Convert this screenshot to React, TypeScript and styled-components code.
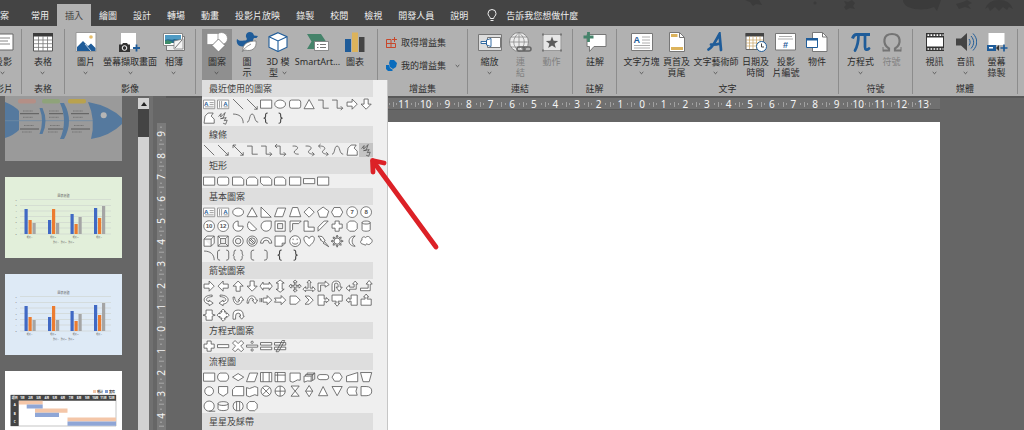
import React from "react";
import styled, { createGlobalStyle, css } from "styled-components";

const GlobalStyle = createGlobalStyle`
  * { box-sizing: border-box; }
  body {
    margin: 0;
    overflow: hidden;
    background: #666;
    font-family: "Noto Sans", "Noto Sans CJK TC", sans-serif;
    font-size: 9px;
    line-height: 11px;
    color: #2b2b2b;
  }
  button, input {
    font: inherit;
    color: inherit;
    border: 0;
    padding: 0;
    margin: 0;
    background: none;
  }
  svg { display: block; }
`;

/* ---------- page frame ---------- */

const Frame = styled.div`
  position: relative;
  display: flex;
  flex-direction: column;
  height: 100vh;
  overflow: hidden;
`;

const TabBar = styled.nav`
  position: relative;
  display: flex;
  align-items: stretch;
  height: 26px;
  padding-top: 4px;
  background: #444;
  color: #f0f0f0;
  flex: none;
`;

const Tab = styled.button<{ $active?: boolean; $first?: boolean }>`
  padding: 0 8px;
  white-space: nowrap;
  flex: none;
  ${(p) => p.$first && css`padding: 0 14px 0 0;`}
  ${(p) =>
    p.$active &&
    css`
      background: #b1b1b1;
      color: #444;
    `}
`;

const Tell = styled.label`
  display: flex;
  align-items: center;
  gap: 9px;
  padding-left: 11px;
  flex: 1;
`;

const TellInput = styled.input`
  width: 120px;
  outline: 0;
  &::placeholder {
    color: #f0f0f0;
    opacity: 1;
  }
`;

const Doodles = styled.svg`
  position: absolute;
  top: 0;
  right: 0;
`;

const Ribbon = styled.div`
  display: flex;
  padding: 3px 0 2px;
  background: #b1b1b1;
  flex: none;
`;

const Group = styled.section<{ $w: number }>`
  display: flex;
  flex-direction: column;
  width: ${(p) => p.$w}px;
  flex: none;
  border-right: 1px solid #8c8c8c;
`;

const Items = styled.div<{ $pad?: number }>`
  display: flex;
  align-items: flex-start;
  height: 54px;
  padding-left: ${(p) => p.$pad ?? 0}px;
`;

const GroupName = styled.div`
  text-align: center;
  white-space: nowrap;
`;

const ClippedGroup = styled(Group)`
  align-items: flex-end;
  overflow: hidden;
  padding-right: 8px;
`;

const ClippedItems = styled.div`
  display: flex;
  flex-direction: column;
  align-items: flex-end;
  height: 54px;
`;

const Tool = styled.button<{ $w: number; $on?: boolean; $off?: boolean }>`
  display: flex;
  flex-direction: column;
  align-items: center;
  gap: 4px;
  width: ${(p) => p.$w}px;
  height: 51px;
  padding-top: 3px;
  flex: none;
  background: ${(p) => (p.$on ? "#8f8f8f" : "none")};
  color: ${(p) => (p.$off ? "#808080" : "inherit")};
`;

const ToolText = styled.span`
  display: flex;
  flex-direction: column;
  align-items: center;
  white-space: nowrap;
`;

const Line = styled.span`
  display: flex;
  align-items: center;
  gap: 4px;
  min-height: 11px;
`;

const Anchor = styled.div`
  position: relative;
`;

const AddIns = styled.div`
  display: flex;
  flex-direction: column;
  gap: 12px;
  height: 54px;
  padding: 8px 0 0 8px;
`;

const AddInButton = styled.button`
  display: flex;
  align-items: center;
  gap: 4px;
  height: 11px;
  white-space: nowrap;
`;

const AddInCaret = styled.span`
  padding-left: 5px;
`;

/* ---------- shape gallery ---------- */

const Gallery = styled.div`
  position: absolute;
  top: 100%;
  left: 0;
  z-index: 2;
  width: 186px;
  height: 420px;
  padding-right: 14px;
  overflow: hidden;
  background: #efefef;
  border-right: 1px solid #c6c6c6;
  color: #444;
`;

const GalleryHead = styled.h3`
  margin: 0;
  padding: 0 7px;
  font-size: 9px;
  font-weight: 400;
  line-height: 17px;
  background: #dedede;
`;

const GalleryGrid = styled.div`
  display: grid;
  grid-template-columns: repeat(12, 1fr);
`;

const ShapeButton = styled.button<{ $on?: boolean }>`
  aspect-ratio: 1;
  background: ${(p) => (p.$on ? "#c4c4c4" : "none")};
`;

/* ---------- workspace ---------- */

const Workspace = styled.main`
  display: flex;
  flex: 1;
  min-height: 0;
  overflow: hidden;
  background: #666;
`;

const SlidePanel = styled.aside`
  display: flex;
  flex-direction: column;
  gap: 16px;
  width: 138px;
  flex: none;
  padding-left: 5px;
`;

const Thumb = styled.svg`
  flex: none;
`;

const ScrollBar = styled.div`
  display: flex;
  flex-direction: column;
  width: 11px;
  margin-top: 2px;
  background: #d2d2d2;
  flex: none;
`;

const ScrollUp = styled.button`
  display: flex;
  align-items: center;
  justify-content: center;
  height: 11px;
`;

const ScrollThumb = styled.div`
  height: 28px;
  background: #444;
`;

const Splitter = styled.div`
  width: 4px;
  margin-right: 4px;
  background: #707070;
  flex: none;
`;

const VRuler = styled.div`
  display: grid;
  grid-template-rows: repeat(19, 1fr);
  width: 9px;
  height: 412px;
  margin-top: 27px;
  background: #7a7a7a;
  color: #f4f4f4;
  font-size: 10px;
  line-height: 9px;
  flex: none;
`;

const VMark = styled.span`
  display: flex;
  align-items: center;
  justify-content: center;
  writing-mode: vertical-rl;
  transform: rotate(180deg);
  background:
    linear-gradient(#a8a8a8, #a8a8a8) 50% 0 / 5px 1px no-repeat,
    linear-gradient(#a8a8a8, #a8a8a8) 50% 20% / 2px 1px no-repeat,
    linear-gradient(#a8a8a8, #a8a8a8) 50% 80% / 2px 1px no-repeat;
`;

const Canvas = styled.div`
  display: flex;
  flex-direction: column;
  flex: 1;
  min-width: 0;
  border-top: 2px solid #585858;
`;

const HRuler = styled.div`
  display: grid;
  grid-template-columns: repeat(27, 1fr);
  height: 12px;
  margin: 0 84px 12px 178px;
  padding: 0 6px;
  background: #707070;
  border-bottom: 1px solid #595959;
  color: #f4f4f4;
  font-size: 10px;
  line-height: 12px;
  flex: none;
`;

const HMark = styled.span`
  text-align: center;
  background:
    linear-gradient(#a0a0a0, #a0a0a0) 0 50% / 1px 5px no-repeat,
    linear-gradient(#a0a0a0, #a0a0a0) 15% 50% / 1px 2px no-repeat,
    linear-gradient(#a0a0a0, #a0a0a0) 85% 50% / 1px 2px no-repeat;
`;

const Page = styled.div`
  flex: 1;
  margin: 0 84px 0 178px;
  background: #fff;
`;

const Annotation = styled.svg`
  position: absolute;
  top: 154px;
  left: 366px;
  z-index: 3;
  pointer-events: none;
`;

/* ---------- ribbon icons ---------- */

const Caret = () => (
  <svg width="5" height="4" viewBox="0 0 5 4" fill="none" stroke="#444" strokeWidth="0.8">
    <path d="M0.7 1 2.5 2.7 4.3 1" />
  </svg>
);

const Icon = ({ w = 22, children }: { w?: number; children: React.ReactNode }) => (
  <svg width={w} height="20" viewBox={`0 0 ${w} 20`} fill="none">
    {children}
  </svg>
);

const icons: Record<string, React.ReactNode> = {
  slide: (
    <Icon>
      <path d="M1 2h20v16H1z" fill="#fff" stroke="#666" />
      <path d="M4 6h14M4 9h12M4 12h14" stroke="#888" />
    </Icon>
  ),
  table: (
    <Icon>
      <path d="M1.5 1.5h19v17.5h-19z" fill="#fff" stroke="#555" />
      <path d="M1 1h20v3.5H1z" fill="#3b3b3b" />
      <path d="M6.5 4v15M11 4v15M15.5 4v15M1.5 8h19M1.5 11.7h19M1.5 15.4h19" stroke="#777" strokeWidth="0.8" />
    </Icon>
  ),
  picture: (
    <Icon>
      <path d="M1 0.5h20v19H1z" fill="#fff" stroke="#999" />
      <path d="M2 19v-4l6-6 5 5 3-2.5 4.5 4.5v3z" fill="#1f5c99" />
      <circle cx="16" cy="5" r="1.8" fill="#e6bd6a" />
      <path d="m10 12 6 7" stroke="#fff" strokeWidth="0.7" />
    </Icon>
  ),
  screenshot: (
    <Icon>
      <path d="M2 1h15v16H2z" fill="#fff" />
      <path d="M0 12.5h3l1-1.5h4l1 1.5h2V20H0z" fill="#333" />
      <circle cx="5.5" cy="16" r="2.3" stroke="#fff" />
      <path d="M17.5 12.5v7M14 16h7" stroke="#1f5c99" strokeWidth="1.8" />
    </Icon>
  ),
  album: (
    <Icon>
      <path d="M3.5 4.5h18v14h-18z" fill="#eee" stroke="#777" />
      <path d="M0.5 1.5h19v12h-19z" fill="#fff" stroke="#888" />
      <path d="M2 3h16v5H2z" fill="#4f9bc4" />
      <path d="M2 8c4-2 7 1 9-1l7 1v3H2z" fill="#23698f" />
      <path d="M2 9c3-2 5 0 8 1l-3 2H2z" fill="#3d8a68" />
      <path d="M11 17V9l9-2v10z" fill="#f5f5f5" stroke="#777" strokeWidth="0.7" />
      <path d="m12 16 7-8" stroke="#777" />
    </Icon>
  ),
  shapes: (
    <Icon>
      <circle cx="15.5" cy="6.5" r="6" fill="#fff" stroke="#888" strokeWidth="0.7" />
      <path d="M1 1.5h11v11H1z" fill="#fff" stroke="#888" strokeWidth="0.7" />
      <path d="m12.5 7 6.500 6.5-6.500 6.5L6 13.5z" fill="#fff" stroke="#777" strokeWidth="0.9" />
    </Icon>
  ),
  duck: (
    <Icon>
      <path d="M10 5c-1-6 7-6.500 8-1.500l4 .500-1.500 2H18c-1 2-1.500 2.500-.500 5l-8 3.500H6.500c-5 0-6.500-4-5.500-7.500 2 2 4 2 7 1.500 3 0 3.500-1.500 2-3.500z" fill="#1f5c99" />
      <path d="M7 19C6 12 12 9 20 9c1 7-4 11-11 9z" fill="#fff" stroke="#777" strokeWidth="0.8" />
      <path d="M6 20c3-5 6-6 9-8" stroke="#777" strokeWidth="0.8" />
    </Icon>
  ),
  cube: (
    <Icon>
      <path d="m11 .7 9 4v10.5l-9 4.3-9-4.3V4.7z" fill="#fff" stroke="#1f5c99" strokeWidth="1.1" />
      <path d="m2 4.7 9 4.3 9-4.3M11 9v10.5" stroke="#1f5c99" strokeWidth="1.1" />
    </Icon>
  ),
  smartart: (
    <Icon w={24}>
      <path d="M1 2h14l5 7.5-4 7.5H1l4.500-7.5z" fill="#45836a" />
      <path d="M8.5 9.5h14v9h-14z" fill="#fff" stroke="#777" strokeWidth="0.8" />
      <path d="M11 12.5h1.5M14 12.5h6M11 15.5h1.5M14 15.5h6" stroke="#777" />
    </Icon>
  ),
  chart: (
    <Icon>
      <path d="M1 7h6v13H1z" fill="#1f5c99" />
      <path d="M8 .5h6V20H8z" fill="#dcb35c" />
      <path d="M15 5h5.5v15H15z" fill="#444" />
    </Icon>
  ),
  zoom: (
    <Icon w={24}>
      <path d="M.5 2.5h23v16H.5z" fill="#ddd" stroke="#777" />
      <path d="M9.500 5.5h13v10h-13z" fill="#fff" stroke="#777" />
      <path d="M8.5 8v5l4.500 1.500v-8zM3 9.5h5.500v2H3z" fill="#fff" stroke="#1f5c99" strokeWidth="0.9" />
    </Icon>
  ),
  link: (
    <Icon w={24}>
      <circle cx="10" cy="10" r="9.5" fill="#ececec" stroke="#8a8a8a" />
      <path d="M.5 10h19M2 5h16M2 15h16M10 .5c-7 6-7 13 0 19 7-6 7-13 0-19zM10 .5v19" stroke="#8a8a8a" strokeWidth="0.8" />
      <rect x="8" y="15" width="8" height="4" rx="2" stroke="#666" strokeWidth="1.5" />
      <rect x="14" y="15" width="8" height="4" rx="2" stroke="#666" strokeWidth="1.5" />
    </Icon>
  ),
  action: (
    <Icon>
      <path d="M2 2.5h18v16H2z" fill="#e6e6e6" stroke="#999" />
      <path d="m11 4.5 1.6 4.2 4.5.2-3.500 2.800 1.200 4.300-3.800-2.400L7.200 16l1.200-4.300-3.500-2.800 4.500-.2z" fill="#5c5c5c" />
      <path d="M1 1.500h2v2H1zM19 1.500h2v2h-2zM1 17.500h2v2H1zM19 17.500h2v2h-2z" fill="#777" />
    </Icon>
  ),
  comment: (
    <Icon w={24}>
      <path d="M4 2.5h19v12H11l-4.500 5v-5H4z" fill="#fff" stroke="#777" />
      <path d="M5.5 0v10M.5 5h10" stroke="#45836a" strokeWidth="2.8" />
    </Icon>
  ),
  textbox: (
    <Icon>
      <path d="M.5 1.5h21v17H.5z" fill="#fff" stroke="#777" />
      <text x="2.5" y="11" fontFamily="Liberation Sans" fontWeight="700" fontSize="9" fill="#1f5c99">A</text>
      <path d="M11 5h8M11 8h8M11 11h8M3 13.5h16M3 16h16" stroke="#999" strokeWidth="0.8" />
    </Icon>
  ),
  header: (
    <Icon w={18}>
      <path d="M1.5.5h10l5 5v14h-15z" fill="#fff" stroke="#777" />
      <path d="M11.5.5v5h5" stroke="#777" />
      <path d="M3 2h6.5v3H3zM3 15h12v3H3z" fill="#dcb35c" />
    </Icon>
  ),
  wordart: (
    <Icon>
      <path d="M3.500 17.500c4-1.500 7-8.500 11-15.500l1.500 16M6 12.500c3 .5 6 0 9-1" stroke="#1f5c99" strokeWidth="2.7" strokeLinecap="round" />
    </Icon>
  ),
  date: (
    <Icon>
      <path d="M1 1.5h17.5v16H1z" fill="#fff" stroke="#666" />
      <path d="M.5 1h18.500v3.500H.5z" fill="#444" />
      <path d="M4.5 4v13M8 4v13M11.5 4v13M15 4v13M1 8h17M1 11h17M1 14h17" stroke="#c9a566" strokeWidth="0.7" />
      <circle cx="16.5" cy="14.5" r="5" fill="#fff" stroke="#1f5c99" />
      <path d="M16.5 11.5v3.500h2.500" stroke="#444" />
    </Icon>
  ),
  number: (
    <Icon>
      <path d="M.5 1.5h20v16.500H.5z" fill="#fff" stroke="#777" />
      <path d="M4 4.5h13M3 7h15" stroke="#999" strokeWidth="0.8" />
      <text x="8" y="16" fontFamily="Liberation Sans" fontWeight="700" fontSize="9" fill="#1f5c99">#</text>
    </Icon>
  ),
  object: (
    <Icon>
      <path d="M6.5.5h10l4.500 4.500v14.500H6.500z" fill="#fff" stroke="#777" />
      <path d="M16.5.5V5H21" stroke="#777" />
      <path d="M.5 6.5h11v9H.5z" fill="#fff" stroke="#1f5c99" />
      <path d="M0 6h12v2.500H0z" fill="#1f5c99" />
    </Icon>
  ),
  pi: (
    <Icon>
      <path d="M2.5 6.5c1-3 2-4 4-4H20" stroke="#1f5c99" strokeWidth="3" />
      <path d="M8.5 3c0 7-1 11-3.500 15.500M15 3v12c0 3 2 3.500 4 1.500" stroke="#1f5c99" strokeWidth="2.7" strokeLinecap="round" />
    </Icon>
  ),
  omega: (
    <Icon>
      <path d="M2 18.500h6v-2C1 12 2 2 11 2s10 10 3 14.500v2h6" stroke="#747474" strokeWidth="2.2" />
      <path d="M2 19.500V15M20 19.500V15" stroke="#747474" />
    </Icon>
  ),
  video: (
    <Icon>
      <path d="M2 1h18v18H2z" fill="#333" />
      <path d="M3 5.5h16v9H3z" fill="#fff" />
      <path d="M3.5 3.2h16M3.5 17h16" stroke="#fff" strokeWidth="1.7" strokeDasharray="1.7 1.3" />
    </Icon>
  ),
  audio: (
    <Icon>
      <path d="M1 6.5h5L12 1v18l-6-5.500H1z" fill="#444" />
      <path d="M14 7c1.500 2 1.500 4.500 0 6.500M16 4c3.500 4 3.500 8.500 0 12.500M18 1.500c5 5.500 5 11.500 0 17" stroke="#1f5c99" />
    </Icon>
  ),
  record: (
    <Icon>
      <path d="M2.5 1h16v12h-16z" fill="#fff" />
      <path d="M1 13h9v6H1z" fill="#1f5c99" />
      <path d="M3 15h4v1.500H3z" fill="#fff" />
      <path d="m10 16 3-3v6z" fill="#333" />
      <path d="M18 12.500v7M14.500 16h7" stroke="#1f5c99" strokeWidth="1.7" />
    </Icon>
  ),
};

type ToolSpec = { icon: string; w: number; lines: string[]; caret?: boolean; off?: boolean; on?: boolean };

const ToolButton = ({ t }: { t: ToolSpec }) => (
  <Tool $w={t.w} $off={t.off} $on={t.on} disabled={t.off}>
    {icons[t.icon]}
    <ToolText>
      {t.lines.map((l, i) => (
        <Line key={l}>
          {l}
          {t.caret && i === 1 && <Caret />}
        </Line>
      ))}
      {t.caret && t.lines.length === 1 && (
        <Line>
          <Caret />
        </Line>
      )}
    </ToolText>
  </Tool>
);

/* ---------- gallery shapes, each on a 14 x 14 field ---------- */

const oval = (cx: number, cy: number, rx: number, ry = rx) =>
  `M${cx - rx} ${cy}a${rx} ${ry} 0 1 0 ${2 * rx} 0a${rx} ${ry} 0 1 0 ${-2 * rx} 0z`;

const shapes: Record<string, string> = {
  line: "M2 2l10 10",
  lineArrow: "M2 2l10 10M12 9v3H9",
  lineBoth: "M2 2l10 10M12 9v3H9M2 5V2h3",
  rect: "M1.5 3h11v8h-11z",
  oval: oval(7, 7, 5.3, 4),
  round: "M3.5 3h7q2 0 2 2v4q0 2-2 2h-7q-2 0-2-2V5q0-2 2-2z",
  triangle: "M7 2.5l5 9H2z",
  elbow: "M2 3h5v8h5.5",
  elbowArrow: "M2 3h5v8h5.5M10.500 9l2 2-2 2",
  elbowBoth: "M2 3h5v8h5.500M10.500 9l2 2-2 2M4 1L2 3l2 2",
  curve: "M4.500 3c7-.500 5 3 3 4s-2.500 4 3 4",
  curveArrow: "M3.500 3c7-.500 6 3 4 4s-2 4 4.500 4M10 9l2 2-2 2",
  curveBoth: "M2.500 3c7-.500 7 3 5 4s-2 4 4.500 4M10 9l2 2-2 2M4.500 1l-2 2 2 2",
  wave: "M2 11c3 0 2-8 5-8s2 8 6 8",
  right: "M2 5h5V2l5 5-5 5V9H2z",
  left: "M12 5H7V2L2 7l5 5V9h5z",
  up: "M5 12V7H2l5-5 5 5H9v5z",
  down: "M5 2v5H2l5 5 5-5H9V2z",
  leftRight: "M1 7l3-4v2h6V3l3 4-3 4V9H4v2z",
  upDown: "M7 1l4 3H9v6h2l-4 3-4-3h2V4H3z",
  quad: "M7 1l2 2H7.7v3.3H11V5l2 2-2 2V7.7H7.7V11H9l-2 2-2-2h1.3V7.7H3V9L1 7l2-2v1.3h3.3V3H5z",
  triArrow: "M7 1l2 2.500H8V9h2.500V7.500L13 10l-2.500 2.500V11h-7v1.500L1 10l2.500-2.500V9H6V3.500H5z",
  bent: "M2 12V4h7V2l4 3.500L9 8V6H4.500v6z",
  uturn: "M2 12V6q0-4 4-4t4 4v2h2l-3 4-3-4h2V6q0-2-2-2T4.500 6v6z",
  leftUp: "M1 9l3.500-3v2H9V5H7.500L10 2l2.500 3H11v5H4.500v2z",
  bentUp: "M1.500 9H9V5H7l3-3.500L13 5h-2v6.500H1.500z",
  curvedRight: "M10 2C0 2 0 10 7 11v1.500L11 10 7 7v1.500C3 8 3 4 10 3.500z",
  curvedLeft: "M4 2c10 0 10 8 3 9v1.500L3 10l4-3v1.500C11 8 11 4 4 3.500z",
  curvedUp: "M2 4c0 9 8 9 9 3h1.500L10 3.500 7 7h1.500C8 10 4 10 3.500 4z",
  curvedDown: "M2 10c0-9 8-9 9-3h1.500L10 10.500 7 7h1.500C8 4 4 4 3.500 10z",
  striped: "M1 5v4M2.500 5v4M4 5h4V2.500L12.500 7 8 11.500V9H4z",
  notched: "M1.500 5H8V2.500L12.500 7 8 11.500V9H1.500l1.500-2z",
  pentArrow: "M2 3h6l4 4-4 4H2z",
  chevron: "M3 3h4l4 4-4 4H3l4-4z",
  callRight: "M2 2h6v4h2V4.500L13 7l-3 2.500V8H8v4H2z",
  callDown: "M2 2h10v6H8v2h1.500L7 13l-2.500-3H6V8H2z",
  callLeft: "M12 2H6v4H4V4.500L1 7l3 2.500V8h2v4h6z",
  callUp: "M2 12h10V6H8V4h1.500L7 1 4.500 4H6v2H2z",
  callLR: "M4 2h6v4l3 1-3 1v4H4V8L1 7l3-1z",
  callQuad: "M7 1l2.500 2.500H8L10.500 6V4.500L13 7l-2.500 2.500V8L8 10.500h1.500L7 13l-2.500-2.500H6L3.500 8v1.500L1 7l2.500-2.500V6L6 3.500H4.500z",
  circArrow: "M2 9V7q0-5 5-5t5 5v1h1l-2.500 3L8 8h1.500q0-3-2.500-3T4.500 8v3H2z",
  freeform: "M2 12l1-7 3-3h5L9 5l3 3v4z",
  scribble: "M2.500 5.500L5 2.500 4.500 6 9 1.500 7 7l-2.500.500L10 6.500l-2 3 3-.500-1.500 4L7 12",
  arc: "M2 3c6 0 10 3 10 9",
  lbrace: "M8.500 2Q6 2 6.500 5 6.500 7 5 7q1.500 0 1.500 2Q6 12 8.500 12",
  rbrace: "M5.500 2Q8 2 7.500 5 7.500 7 9 7 7.500 7 7.500 9 8 12 5.500 12",
  lbracket: "M9 2Q6 2 6 4v6q0 2 3 2",
  rbracket: "M5 2q3 0 3 2v6q0 2-3 2",
  brackets: "M4 2Q1.500 2 1.500 4v6q0 2 2.500 2M10 2q2.500 0 2.500 2v6q0 2-2.500 2",
  braces: "M5 2Q3 2 3 4v2L2 7l1 1v2q0 2 2 2M9 2q2 0 2 2v2l1 1-1 1v2q0 2-2 2",
  snip1: "M1.500 3H10l2.500 2.500V11h-11z",
  snip2: "M1.500 5.500L4 3h6l2.500 2.500V11h-11z",
  snipDiag: "M1.500 3H10l2.500 2.500V11H4L1.500 8.500z",
  snipRound: "M4 3h6l2.500 2.500V11h-11V5q0-2 2.500-2z",
  thin: "M1.500 4.500h11v5h-11z",
  rightTri: "M2 2v10h10z",
  para: "M4.500 3h8l-3 8.500h-8z",
  trapezoid: "M4.500 2.500h5l3 9h-11z",
  diamond: "M7 2l5 5-5 5-5-5z",
  penta: "M7 2l5.500 4-2 6h-7l-2-6z",
  hexa: "M4 2.500h6L12.500 7 10 11.500H4L1.500 7z",
  octa: "M4.500 2h5L12 4.500v5L9.500 12h-5L2 9.500v-5z",
  circle: oval(7, 7, 5.3),
  pie: "M7 2a5 5 0 1 0 5 5H7z",
  chord: "M4 2.500A5.300 5.300 0 1 0 11.500 10z",
  tear: "M12 2v5a5 5 0 1 1-5-5z",
  frame: "M2 2h10v10H2zM4.500 4.500h5v5h-5z",
  halfFrame: "M2 2h11l-2.500 2.500h-6v6L2 13z",
  corner: "M2 2h4v6h6v4H2z",
  stripe: "M2 12V8l6-6h4z",
  plus: "M5 2h4v3h3v4H9v3H5V9H2V5h3z",
  can: "M3 3.500v7c0 2 8 2 8 0v-7c0-2-8-2-8 0zc0 2 8 2 8 0",
  cube: "M2 5l3-3h7v7l-3 3H2zM2 5h7v7M9 5l3-3",
  bevel: "M2 2h10v10H2zM4.500 4.500h5v5h-5zM2 2l2.500 2.500M12 2L9.500 4.500M2 12l2.500-2.500M12 12L9.500 9.500",
  donut: oval(7, 7, 5) + oval(7, 7, 2.7),
  no: oval(7, 7, 5) + oval(7, 7, 3.2) + "M4.500 5.500l4 4M5.500 4.500l4 4",
  block: "M1.500 9a5.500 5.500 0 0 1 11 0H10a3 3 0 0 0-6 0z",
  fold: "M2 2h10v7l-3 3H2zM12 9H9v3",
  smile: oval(7, 7, 5.3) + "M4 8.500q3 3 6 0M5 4.500v1.500M9 4.500v1.500",
  heart: "M7 12C-1 6 2 1 5 2.500q1.500.5 2 2 .5-1.500 2-2C12 1 15 6 7 12z",
  bolt: "M2 2l4 .5 3 4-1 .5 4.500 5.500L7 9l1-.5-4-3h1z",
  sun: oval(7, 7, 3) + "M7 1l1 2H6zM7 13l1-2H6zM1 7l2-1v2zM13 7l-2-1v2zM3 3l2 .5L3.500 5zM11 3l-2 .5L10.500 5zM3 11l2-.5L3.500 9zM11 11l-2-.5L10.500 9z",
  moon: "M10 2C2 2 2 12 10 12 6 10 6 4 10 2z",
  cloud: "M4 10C1 10 1 6 3 6 2 3 5 2 6.500 3.500 8 1.500 11 2.500 11 4.500c2.500 0 2.500 4 .5 4.500-1 2-3 1.500-4 .5l-1 1.500z",
  minus: "M1.500 5.500h11v3h-11z",
  times: "M4 1.500l3 3 3-3L12.500 4l-3 3 3 3-2.500 2.500-3-3-3 3L1.500 10l3-3-3-3z",
  divide: "M1.500 6h11v2h-11z" + oval(7, 3.2, 1.1) + oval(7, 10.8, 1.1),
  equal: "M1.500 3.500h11V6h-11zM1.500 8h11v2.500h-11z",
  notEqual: "M1.500 3.500h11V6h-11zM1.500 8h11v2.500h-11zM9 1.500h2.500L5.500 12.500H3z",
  flowAlt: "M4 3h6q2.500 1 2.500 4T10 11H4Q1.500 10 1.500 7T4 3z",
  decision: "M7 3.500L12.500 7 7 10.500 1.500 7z",
  predefined: "M1.500 2.500h11v9h-11zM4 2.500v9M10 2.500v9",
  internal: "M2 2.500h10v9H2zM2 5h10M4.500 2.500v9",
  document: "M2 3h10v7q-3-1-5 1t-5 0z",
  multidoc: "M2 6h7v5q-4-1-7 1zM3.500 6V4.500h7V10M5 4.500V3h7.500v6L9 11M10.500 4.500l2-1.500M9 6l3.500-3",
  terminator: "M4 4.500h6q2.500 0 2.500 2.500T10 9.500H4Q1.500 9.500 1.500 7T4 4.500z",
  prep: "M4.500 3h5L12 7l-2.500 4h-5L2 7z",
  manualIn: "M1.500 6l11-3.500v9h-11z",
  manualOp: "M1.500 2.500h11l-2.500 9H4z",
  connector: oval(7, 7, 4.3),
  offpage: "M2.500 2.500h9V9L7 12 2.500 9z",
  card: "M4.500 2.500h8v9h-11v-6z",
  tape: "M1.500 3.500q3 2 5.500 0t5.500 0v8q-3-2-5.500 0t-5.500 0z",
  sumJunction: oval(7, 7, 5) + "M3.500 3.500l7 7M10.500 3.500l-7 7",
  orJunction: oval(7, 7, 5) + "M2 7h10M7 2v10",
  collate: "M3 2h8L3 12h8z",
  sort: "M7 1.500L10.500 7 7 12.500 3.500 7zM3.500 7h7",
  extract: "M7 2.500l4.500 9h-9z",
  merge: "M2 2.500h10l-5 9z",
  stored: "M4 3h8q-2.500 4 0 8H4Q0 7 4 3z",
  delay: "M2 2.500h5q5.500 0 5.500 4.500T7 11.500H2z",
  seq: oval(7, 7, 5) + "M7 12h6",
  disk: "M2 4.500v5c0 2.500 10 2.500 10 0v-5c0-2.500-10-2.500-10 0zc0 2.500 10 2.500 10 0",
  direct: "M5 2.500h4q3 1 3 4.500t-3 4.500H5Q2 10.500 2 7t3-4.500zM5.500 2.500v9M8.500 2.500v9",
  display: "M4.500 2.500h5L12 5v4l-2.500 2.500h-5L2 9V5z",
};

const numbered = ["7", "8", "10", "12"];

const ShapeIcon = ({ name }: { name: string }) => {
  if (name === "boxH" || name === "boxV") {
    return (
      <svg viewBox="0 0 14 14" fill="none" stroke="#888" strokeWidth="0.8">
        <path d="M1.5 3h11v8.5h-11z" fill="#fff" />
        <text x={name === "boxH" ? 2 : 7} y="8.5" fontFamily="Liberation Sans" fontWeight="700" fontSize="6" fill="#1f5c99" stroke="none">
          A
        </text>
        <path d={name === "boxH" ? "M7.5 5.5h4M7.5 7.5h4M3 9.7h8.5" : "M3.5 4v6.5M5.5 4v6.5M7.5 9.7h4"} />
      </svg>
    );
  }
  if (numbered.includes(name)) {
    return (
      <svg viewBox="0 0 14 14" fill="#fff" stroke="#666" strokeWidth="0.8">
        <path d={shapes.circle} />
        <text x="7" y="9.2" textAnchor="middle" fontFamily="Liberation Sans" fontWeight="700" fontSize="6" fill="#555" stroke="none">
          {name}
        </text>
      </svg>
    );
  }
  const open = /^(line|elbow|curve|wave$|arc|scribble|[lr]br|brace|bracket)/.test(name) && !name.startsWith("curved");
  const dark = name === "lbrace" || name === "rbrace";
  return (
    <svg
      viewBox="0 0 14 14"
      fill={open ? "none" : "#fff"}
      stroke={dark ? "#444" : "#585858"}
      strokeWidth={dark ? 1.1 : 0.8}
      strokeLinejoin="round"
    >
      <path d={shapes[name]} fillRule="evenodd" />
    </svg>
  );
};

const gallery: { title: string; items: string; selected?: string }[] = [
  {
    title: "最近使用的圖案",
    items: "boxH boxV line lineArrow rect oval round triangle elbow elbowArrow right down freeform scribble arc wave lbrace rbrace",
  },
  {
    title: "線條",
    items: "line lineArrow lineBoth elbow elbowArrow elbowBoth curve curveArrow curveBoth wave freeform scribble",
    selected: "scribble",
  },
  { title: "矩形", items: "rect round snip1 snip2 snipDiag snipRound rect thin rect" },
  {
    title: "基本圖案",
    items:
      "boxH boxV oval triangle rightTri para trapezoid diamond penta hexa 7 8 10 12 pie chord tear frame halfFrame corner stripe plus octa can cube bevel donut no block fold smile heart bolt sun moon cloud arc brackets braces lbracket rbracket lbrace rbrace",
  },
  {
    title: "箭號圖案",
    items:
      "right left up down leftRight upDown quad triArrow bent uturn leftUp bentUp curvedRight curvedLeft curvedUp curvedDown striped notched pentArrow chevron callRight callDown callLeft callUp callLR callQuad circArrow",
  },
  { title: "方程式圖案", items: "plus minus times divide equal notEqual" },
  {
    title: "流程圖",
    items:
      "rect flowAlt decision para predefined internal document multidoc terminator prep manualIn manualOp connector offpage card tape sumJunction orJunction collate sort extract merge stored delay seq disk direct display",
  },
  { title: "星星及綵帶", items: "" },
];

const ShapeGallery = () => (
  <Gallery>
    {gallery.map((g) => (
      <section key={g.title}>
        <GalleryHead>{g.title}</GalleryHead>
        <GalleryGrid>
          {g.items
            .split(" ")
            .filter(Boolean)
            .map((name, i) => (
              <ShapeButton key={i} $on={name === g.selected} aria-label={name}>
                <ShapeIcon name={name} />
              </ShapeButton>
            ))}
        </GalleryGrid>
      </section>
    ))}
  </Gallery>
);

/* ---------- slide thumbnails ---------- */

const FishThumb = () => (
  <Thumb width="117" height="65" viewBox="0 16 117 65">
    <path d="M0 0h117v81H0z" fill="#9a9a9a" />
    <path d="M0 22q10 4 14 9v19q-5 5-14 8z" fill="#55799e" />
    <path d="M0 40.7h110" stroke="#6f8aa5" strokeWidth="0.8" />
    <path d="M34.5 28h3q6 13 0 26h-3q5-13 0-26zM55 23h4q10 18 0 36h-4q8-18 0-36z" fill="#55799e" />
    <path d="M83 22q22 4 34 16v6q-12 12-31 15 5-19-3-37z" fill="#55799e" />
    <circle cx="98.7" cy="35.3" r="3" fill="#b5b5b5" />
    <rect x="13" y="19" width="18" height="4.5" rx="2" fill="#b48f86" />
    <rect x="37" y="19" width="18" height="4.5" rx="2" fill="#8fa37a" />
    <rect x="63" y="19" width="18" height="4.5" rx="2" fill="#b9a24e" />
    <path d="M15 33.7h19M15 49h19M44 33.7h14M43 49h15M66 33.7h18M66 49h19" stroke="#4a4a4a" strokeWidth="0.8" />
    <path
      d="M18 31h10M18 37.3h10M19 45.5h10M17 52h10M44 31h10M44 37.3h10M45 45.5h10M43 52h10M68 31h10M68 37.3h10M69 45.5h10M67 52h10"
      stroke="#666"
      strokeWidth="0.7"
      strokeDasharray="1 0.4"
    />
  </Thumb>
);

const bars: [number, number, number, number][] = [
  [19.5, 25, 14, 11],
  [43, 14, 25, 11],
  [65.5, 20, 10, 17],
  [89, 26, 16, 28],
];

const ChartThumb = ({ bg }: { bg: string }) => (
  <Thumb width="117" height="81" viewBox="0 0 117 81" fontSize="3" fill="#666">
    <path d="M0 0h117v81H0z" fill={bg} />
    <text x="58.5" y="19.5" textAnchor="middle">圖表標題</text>
    <path d="M15 22.5h91M15 28.5h91M15 34h91M15 39.5h91M15 45.5h91M15 51h91M15 57h91" stroke="#cdd2cd" strokeWidth="0.6" />
    {["6", "5", "4", "3", "2", "1", "0"].map((n, i) => (
      <text key={n} x="10.5" y={23.5 + i * 5.7} fontSize="2">
        {n}
      </text>
    ))}
    {bars.map(([x, a, b, c], i) => (
      <g key={i}>
        <rect x={x} y={57 - a} width="3.2" height={a} fill="#4069c4" />
        <rect x={x + 4} y={57 - b} width="3.2" height={b} fill="#ec7c30" />
        <rect x={x + 8} y={57 - c} width="3.2" height={c} fill="#a5a5a5" />
        <text x={x + 5} y="61" textAnchor="middle" fontSize="2">
          {`類別 ${i + 1}`}
        </text>
      </g>
    ))}
    <text x="58.5" y="65.5" textAnchor="middle" fontSize="2">數列 1　數列 2　數列 3</text>
  </Thumb>
);

const GanttThumb = () => (
  <Thumb width="117" height="81" viewBox="0 0 117 81" fontSize="3" fontWeight="700">
    <path d="M0 0h117v81H0z" fill="#fff" />
    <path d="M88 19h3v3h-3z" fill="#f4c6a8" />
    <path d="M100 19h3v3h-3z" fill="#7f9bd1" />
    <text x="92" y="22" fill="#333">預計</text>
    <text x="104" y="22" fill="#333">實際</text>
    <path d="M5.7 24H111v31H5.7z" fill="#fff" stroke="#888" strokeWidth="0.5" />
    <path d="M5.7 24H111v5.7H13.7V55h-8z" fill="#444" />
    <g fill="#fff" textAnchor="middle">
      <text x="9.7" y="28">項目</text>
      {Array.from({ length: 12 }, (_, i) => (
        <text key={i} x={17.5 + i * 8.1} y="28">{`${i + 1}月`}</text>
      ))}
      <text x="9.7" y="35">A</text>
      <text x="9.7" y="43.5">B</text>
      <text x="9.7" y="52">C</text>
    </g>
    <path d="M14 29.7h23.7v3.8H14zM30 37.5h32.5v4.3H30zM62.5 46.5H111v4H62.5z" fill="#f4c6a8" />
    <path d="M21.7 33.5h16v4h-16zM30 41.8h24V46H30zM62.5 50.5H111v4.3H62.5z" fill="#8fa6d6" />
  </Thumb>
);

/* ---------- app ---------- */

const tabs = ["常用", "插入", "繪圖", "設計", "轉場", "動畫", "投影片放映", "錄製", "校閱", "檢視", "開發人員", "說明"];

type GroupSpec = { name: string; w: number; pad: number; tools: ToolSpec[] };

const before: GroupSpec[] = [
  { name: "表格", w: 43, pad: 6, tools: [{ icon: "table", w: 30, lines: ["表格"], caret: true }] },
  {
    name: "影像",
    w: 131,
    pad: 4,
    tools: [
      { icon: "picture", w: 34, lines: ["圖片"], caret: true },
      { icon: "screenshot", w: 54, lines: ["螢幕擷取畫面"], caret: true },
      { icon: "album", w: 34, lines: ["相簿"], caret: true },
    ],
  },
];

const illustrations: ToolSpec[] = [
  { icon: "duck", w: 30, lines: ["圖", "示"] },
  { icon: "cube", w: 32, lines: ["3D 模", "型"], caret: true },
  { icon: "smartart", w: 47, lines: ["SmartArt..."] },
  { icon: "chart", w: 28, lines: ["圖表"] },
];

const after: GroupSpec[] = [
  {
    name: "連結",
    w: 105,
    pad: 6,
    tools: [
      { icon: "zoom", w: 31, lines: ["縮放"], caret: true },
      { icon: "link", w: 31, lines: ["連", "結"], off: true },
      { icon: "action", w: 31, lines: ["動作"], off: true },
    ],
  },
  { name: "註解", w: 44, pad: 6, tools: [{ icon: "comment", w: 32, lines: ["註解"] }] },
  {
    name: "文字",
    w: 222,
    pad: 5,
    tools: [
      { icon: "textbox", w: 39, lines: ["文字方塊"], caret: true },
      { icon: "header", w: 31, lines: ["頁首及", "頁尾"] },
      { icon: "wordart", w: 48, lines: ["文字藝術師"], caret: true },
      { icon: "date", w: 31, lines: ["日期及", "時間"] },
      { icon: "number", w: 30, lines: ["投影", "片編號"] },
      { icon: "object", w: 32, lines: ["物件"] },
    ],
  },
  {
    name: "符號",
    w: 74,
    pad: 6,
    tools: [
      { icon: "pi", w: 31, lines: ["方程式"], caret: true },
      { icon: "omega", w: 31, lines: ["符號"], off: true },
    ],
  },
  {
    name: "媒體",
    w: 105,
    pad: 6,
    tools: [
      { icon: "video", w: 31, lines: ["視訊"], caret: true },
      { icon: "audio", w: 31, lines: ["音訊"], caret: true },
      { icon: "record", w: 31, lines: ["螢幕", "錄製"] },
    ],
  },
];

const RibbonGroup = ({ g }: { g: GroupSpec }) => (
  <Group $w={g.w}>
    <Items $pad={g.pad}>
      {g.tools.map((t) => (
        <ToolButton key={t.icon} t={t} />
      ))}
    </Items>
    <GroupName>{g.name}</GroupName>
  </Group>
);

export default function App() {
  return (
    <Frame>
      <GlobalStyle />
      <TabBar>
        <Tab $first>案</Tab>
        {tabs.map((t) => (
          <Tab key={t} $active={t === "插入"}>
            {t}
          </Tab>
        ))}
        <Tell>
          <svg width="10" height="13" viewBox="0 0 10 13" fill="none" stroke="#f0f0f0">
            <path d="M3.3 9.5C3.3 7.5 1 7 1 4.5a4 4 0 0 1 8 0C9 7 6.7 7.5 6.7 9.5zM3.5 11.5h3" />
          </svg>
          <TellInput placeholder="告訴我您想做什麼" aria-label="告訴我您想做什麼" />
        </Tell>
        <Doodles width="284" height="14" viewBox="0 0 284 14" fill="#3b3b3b">
          <path d="M5 0h14l3 5-6-1-3 2-3-4zM104 1l4 1 4-2 3 3-2 3 2 3-5-1-4 2-2-3 2-2z" />
          <circle cx="75" cy="3" r="1.5" />
          <path d="M163 0h38l-4 11-3-4q-13 5-26 0-5-3-5-7zM216 4l7-2 4-2 5 3-4 2 3 4-6-2-6 2zM245 9q3-9 14-9t14 9l-4-2-2 3-4-3-4 4-4-4-5 4-2-4z" />
        </Doodles>
      </TabBar>

      <Ribbon>
        <ClippedGroup $w={22}>
          <ClippedItems>
            <Tool $w={20}>
              {icons.slide}
              <ToolText>
                <Line>投影</Line>
                <Line>
                  <Caret />
                </Line>
              </ToolText>
            </Tool>
          </ClippedItems>
          <GroupName>影片</GroupName>
        </ClippedGroup>
        {before.map((g) => (
          <RibbonGroup key={g.name} g={g} />
        ))}
        <Group $w={182}>
          <Items $pad={6}>
            <Anchor>
              <ToolButton t={{ icon: "shapes", w: 30, lines: ["圖案"], caret: true, on: true }} />
              <ShapeGallery />
            </Anchor>
            {illustrations.map((t) => (
              <ToolButton key={t.icon} t={t} />
            ))}
          </Items>
        </Group>
        <Group $w={90}>
          <AddIns>
            <AddInButton>
              <svg width="11" height="11" viewBox="0 0 11 11" fill="none" stroke="#c8472b">
                <path d="M.5 2.500H5v8H.5zM.5 6.500h9v4h-9M8.500 0v5M6 2.500h5" />
              </svg>
              取得增益集
            </AddInButton>
            <AddInButton>
              <svg width="11" height="11" viewBox="0 0 11 11" fill="#0a6cbd">
                <path d="M4 0h4l3 3-1 4-3 2-3-2-1-4zM0 5l3 0 1 3 3 2-1 1H2L0 9z" />
              </svg>
              我的增益集
              <AddInCaret>
                <Caret />
              </AddInCaret>
            </AddInButton>
          </AddIns>
          <GroupName>增益集</GroupName>
        </Group>
        {after.map((g) => (
          <RibbonGroup key={g.name} g={g} />
        ))}
      </Ribbon>

      <Workspace>
        <SlidePanel>
          <FishThumb />
          <ChartThumb bg="#e2efda" />
          <ChartThumb bg="#deeaf6" />
          <GanttThumb />
        </SlidePanel>
        <ScrollBar>
          <ScrollUp aria-label="up">
            <svg width="6" height="4" viewBox="0 0 6 4">
              <path d="M0 4l3-4 3 4z" fill="#222" />
            </svg>
          </ScrollUp>
          <ScrollThumb />
        </ScrollBar>
        <Splitter />
        <VRuler>
          {Array.from({ length: 19 }, (_, i) => (
            <VMark key={i}>{Math.abs(9 - i)}</VMark>
          ))}
        </VRuler>
        <Canvas>
          <HRuler>
            {Array.from({ length: 27 }, (_, i) => (
              <HMark key={i}>{Math.abs(i - 13)}</HMark>
            ))}
          </HRuler>
          <Page />
        </Canvas>
      </Workspace>

      <Annotation width="76" height="100" viewBox="0 0 76 100" fill="none" stroke="#dc2127" strokeLinecap="round" strokeLinejoin="round" strokeWidth="4.8">
        <path d="M7 7L70 93" />
        <path d="M7 18L6.500 6.500 18 9" />
      </Annotation>
    </Frame>
  );
}
